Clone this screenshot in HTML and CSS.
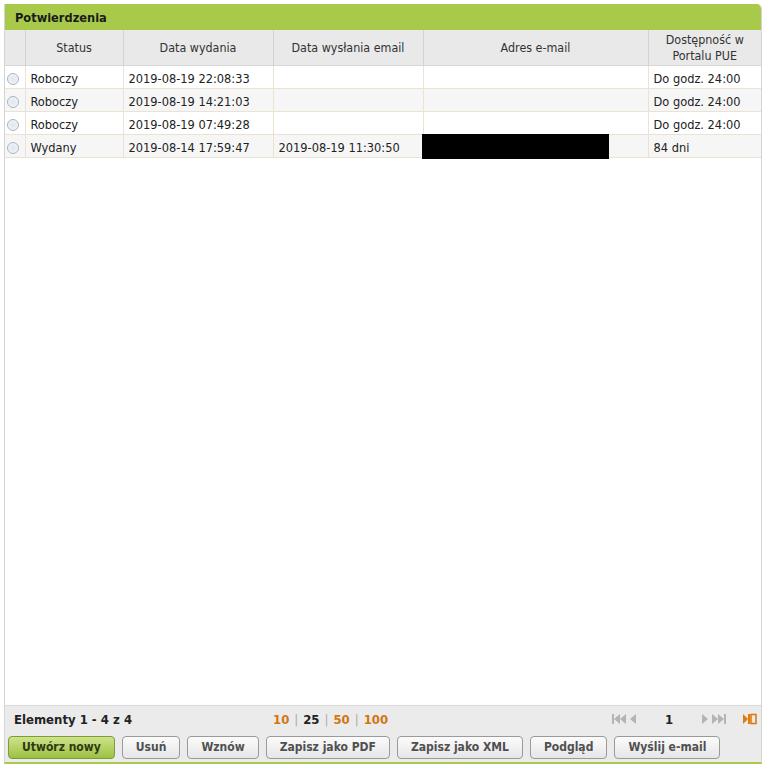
FILE: index.html
```html
<!DOCTYPE html>
<html lang="pl">
<head>
<meta charset="utf-8">
<title>Potwierdzenia</title>
<link rel="stylesheet" href="styles.css">
</head>
<body>
<div class="panel">
  <div class="panel-head">Potwierdzenia</div>
  <table class="grid">
    <colgroup>
      <col class="c-radio"><col class="c-status"><col class="c-date"><col class="c-date"><col class="c-mail"><col class="c-avail">
    </colgroup>
    <thead>
      <tr>
        <th></th>
        <th>Status</th>
        <th>Data wydania</th>
        <th>Data wysłania email</th>
        <th>Adres e-mail</th>
        <th>Dostępność w<br>Portalu PUE</th>
      </tr>
    </thead>
    <tbody>
      <tr>
        <td class="rc"><span class="radio"></span></td>
        <td>Roboczy</td><td>2019-08-19 22:08:33</td><td></td><td></td><td>Do godz. 24:00</td>
      </tr>
      <tr class="alt">
        <td class="rc"><span class="radio"></span></td>
        <td>Roboczy</td><td>2019-08-19 14:21:03</td><td></td><td></td><td>Do godz. 24:00</td>
      </tr>
      <tr>
        <td class="rc"><span class="radio"></span></td>
        <td>Roboczy</td><td>2019-08-19 07:49:28</td><td></td><td></td><td>Do godz. 24:00</td>
      </tr>
      <tr class="alt">
        <td class="rc"><span class="radio"></span></td>
        <td>Wydany</td><td>2019-08-14 17:59:47</td><td>2019-08-19 11:30:50</td><td class="mail"><span class="redact"></span></td><td>84 dni</td>
      </tr>
    </tbody>
  </table>
  <div class="fill"></div>
  <div class="pager">
    <div class="count">Elementy 1 - 4 z 4</div>
    <div class="sizes"><span class="lnk">10</span><span class="sep">|</span><span class="cur">25</span><span class="sep">|</span><span class="lnk">50</span><span class="sep">|</span><span class="lnk">100</span></div>
    <div class="nav">
      <svg width="26" height="12" viewBox="0 0 26 12"><rect x="0" y="1" width="2" height="10" fill="#b4b4b4"/><path d="M8 1 L2 6 L8 11 Z M14 1 L8 6 L14 11 Z M24 1 L18 6 L24 11 Z" fill="#b4b4b4"/></svg>
      <span class="page">1</span>
      <svg width="26" height="12" viewBox="0 0 26 12"><path d="M2 1 L8 6 L2 11 Z M12 1 L18 6 L12 11 Z M18 1 L24 6 L18 11 Z" fill="#b4b4b4"/><rect x="24" y="1" width="2" height="10" fill="#b4b4b4"/></svg>
      <svg class="exp" width="14" height="12" viewBox="0 0 14 12"><path d="M0 1 L5 6 L0 11 Z" fill="#e07b10"/><rect x="5" y="1" width="2" height="10" fill="#e07b10"/><rect x="8" y="1.5" width="5" height="9" fill="none" stroke="#e07b10" stroke-width="1.6"/></svg>
    </div>
  </div>
  <div class="actions">
    <button class="btn primary">Utwórz nowy</button>
    <button class="btn">Usuń</button>
    <button class="btn">Wznów</button>
    <button class="btn">Zapisz jako PDF</button>
    <button class="btn">Zapisz jako XML</button>
    <button class="btn">Podgląd</button>
    <button class="btn">Wyślij e-mail</button>
  </div>
</div>
</body>
</html>
```

FILE: styles.css
```css
html, body { margin: 0; padding: 0; background: #fff; }
body { font-family: "DejaVu Sans Condensed", "DejaVu Sans", sans-serif; font-size: 12px; color: #222; }

.panel {
  margin: 4px 0 0 4px;
  width: 756px;
  height: 758px;
  display: flex;
  flex-direction: column;
  border-left: 1px solid #d4d4d4;
  border-right: 1px solid #d4d4d4;
  border-bottom: 2px solid #a9c94b;
  border-top-right-radius: 5px;
  overflow: hidden;
}

.panel-head {
  height: 26px;
  line-height: 27px;
  background: #a9c94b;
  padding-left: 10px;
  font-weight: bold;
  font-size: 12.7px;
  color: #1b1b1b;
  flex: none;
}

.grid { width: 100%; border-collapse: collapse; table-layout: fixed; flex: none; }
.c-radio { width: 20px; }
.c-status { width: 98px; }
.c-date { width: 150px; }
.c-mail { width: 225px; }
.c-avail { width: 113px; }

.grid th {
  height: 34px;
  background: #e9e9e9;
  font-weight: normal;
  font-size: 12.4px;
  color: #333;
  text-align: center;
  line-height: 16px;
  border-left: 1px solid #d3d3d3;
  border-bottom: 1px solid #d8d8d8;
  padding: 1px 0 0;
}
.grid th:first-child { border-left: none; }

.grid td {
  height: 20px;
  padding: 2px 5px 0;
  font-size: 12.7px;
  border-left: 1px solid #ece2d2;
  border-bottom: 1px solid #ece2d2;
  white-space: nowrap;
  color: #222;
}
.grid td:first-child { border-left: none; }
.grid tr.alt td { background: #f6f6f6; }
.grid td.rc { padding: 3px 0 0 2px; height: 19px; vertical-align: middle; }
.grid td.mail { padding: 0; height: 22px; position: relative; }

.radio {
  display: block;
  width: 10px;
  height: 10px;
  border-radius: 50%;
  border: 1px solid #a8b4be;
  background: radial-gradient(circle at 50% 50%, #dfe6ec 0, #eef1f4 60%, #fff 100%);
}

.redact { position: absolute; left: -2px; top: -1px; width: 187px; height: 25px; background: #000; }

.fill { flex: 1; background: #fff; }

.pager {
  flex: none;
  height: 26px;
  background: #ebebeb;
  border-top: 1px solid #dadada;
  display: flex;
  align-items: center;
  font-weight: bold;
  font-size: 13px;
}
.count { flex: none; width: 259px; padding-left: 9px; color: #222; }
.sizes { flex: none; width: 330px; display: flex; gap: 5px; }
.sizes .lnk { color: #d27514; }
.sizes .cur { color: #222; }
.sizes .sep { color: #aaa; font-weight: normal; }
.nav { flex: none; display: flex; align-items: center; margin-left: 9px; }
.nav svg { flex: none; }
.nav .page { width: 62px; text-align: center; color: #222; }
.nav .exp { margin-left: 17px; }

.actions {
  flex: none;
  height: 30px;
  background: #ebebeb;
  display: flex;
  align-items: center;
  gap: 7px;
  padding-left: 3px;
}

.btn {
  height: 23px;
  padding: 0 13px;
  border: 1px solid #9a9a9a;
  border-radius: 4px;
  background: linear-gradient(#fbfbfb, #e6e6e6);
  font-family: inherit;
  font-weight: bold;
  font-size: 12px;
  color: #505050;
  cursor: pointer;
}
.btn.primary {
  border-color: #7d9c33;
  background: linear-gradient(#cfe38c, #9cc141);
  color: #2e3b12;
  padding: 0 13px;
}
```
